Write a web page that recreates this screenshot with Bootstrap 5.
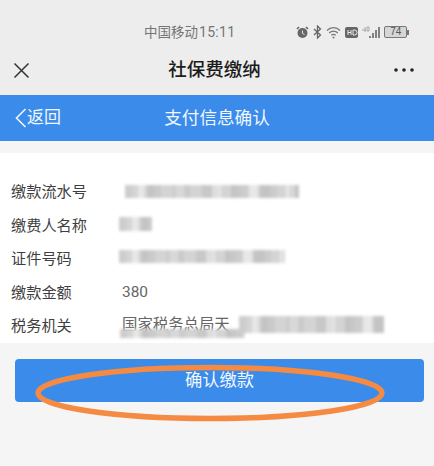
<!DOCTYPE html>
<html>
<head>
  <title>社保费缴纳</title>
  <link rel="stylesheet" href="https://cdn.jsdelivr.net/npm/bootstrap@5.3.0/dist/css/bootstrap.min.css">
  <style>
    body {
      width: 434px;
      height: 466px;
      overflow: hidden;
      background: #f5f5f5;
      font-family: "Liberation Sans", "Noto Sans CJK SC", sans-serif;
      position: relative;
    }

    .wx-head {
      height: 95px;
      background: #ededed;
    }

    .status-line {
      height: 44px;
      padding-top: 20px;
      padding-left: 144px;
      padding-right: 20px;
      color: #757575;
      font-size: 13.5px;
      line-height: 19px;
    }

    .status-time {
      font-family: Roboto, sans-serif;
      font-size: 14px;
      margin-left: 1px;
      letter-spacing: .3px;
    }

    .status-icons {
      margin-left: 61px;
      gap: 4px;
    }

    .batt {
      width: 23px;
      height: 12px;
      border: 1px solid #777;
      border-radius: 2px;
      font-size: 10px;
      line-height: 10px;
      text-align: center;
      background: #d6d6d6;
      color: #555;
    }

    .title-line {
      height: 51px;
      padding: 1px 20px 0 13px;
    }

    .title-text {
      font-size: 18.5px;
      font-weight: 500;
      color: #1c1c1c;
      line-height: 1;
      margin-left: 5px;
    }

    .blue-bar {
      height: 46px;
      background: #3a8bea;
      color: #fff;
      position: relative;
      font-size: 17px;
    }

    .back-link {
      padding-left: 15px;
      color: #f1f7fe;
    }

    .bar-title {
      position: absolute;
      left: 0;
      top: 0;
      width: 100%;
      height: 100%;
      font-size: 17.6px;
      padding-right: 0;
      color: #f1f7fe;
    }

    .info-panel {
      margin-top: 12px;
      height: 190px;
      background: #fff;
      padding: 22px 0 0 11px;
      color: #444;
      font-size: 15.2px;
    }

    .info-line {
      height: 33.5px;
      line-height: 33.5px;
      position: relative;
    }

    .info-label {
      width: 111px;
      color: #3f3f3f;
    }

    .info-value {
      color: #666;
      font-family: Roboto, "Noto Sans CJK SC", sans-serif;
      font-size: 15.4px;
      white-space: nowrap;
    }

    .smudge {
      position: absolute;
      background:
        repeating-linear-gradient(90deg, rgba(190,190,190,.45) 0 13px, rgba(235,235,235,.3) 13px 22px, rgba(170,170,170,.3) 22px 37px),
        repeating-linear-gradient(90deg, #d8d8d8 0 7px, #e6e6e6 7px 19px, #cfcfcf 19px 29px);
      filter: blur(1.6px);
    }

    .pay-wrap {
      padding: 16px 10px 0 15px;
    }

    .pay-btn {
      width: 409px;
      height: 43px;
      background: #3a8bea;
      border: 0;
      border-radius: 4px;
      color: #f1f7fe;
      font-size: 17.3px;
      padding: 0;
    }

    .ring {
      position: absolute;
      left: 30px;
      top: 360px;
      width: 360px;
      height: 66px;
    }
  </style>
</head>
<body>
  <div class="wx-head">
    <div class="status-line d-flex align-items-center">
      <span>中国移动</span><span class="status-time">15:11</span>
      <div class="status-icons d-flex align-items-center">
        <svg width="13" height="13" viewBox="0 0 13 13"><circle cx="6.5" cy="7" r="5" fill="#666"/><path d="M1 3l2-2M12 3l-2-2" stroke="#666" stroke-width="1.6"/><path d="M6.5 4.5v3l2 1" stroke="#ddd" fill="none"/></svg>
        <svg width="9" height="14" viewBox="0 0 9 14"><path d="M1 4l6.5 6-3 3V1l3 3L1 10" fill="none" stroke="#666" stroke-width="1.3"/></svg>
        <svg width="15" height="13" viewBox="0 0 15 13"><path d="M1 4.5a9 9 0 0 1 13 0M3.2 7a6 6 0 0 1 8.600 0M5.300 9.300a3 3 0 0 1 4.400 0" fill="none" stroke="#777" stroke-width="1.200"/><circle cx="7.500" cy="11.500" r="1" fill="#777"/></svg>
        <svg width="13" height="11" viewBox="0 0 13 11"><rect width="13" height="11" rx="2" fill="#666"/><path d="M3 3v5M6 3v5M3 5.500h3M8 3v5h1.500a2.500 2.500 0 0 0 0-5z" stroke="#eee" fill="none"/></svg>
        <svg width="18" height="13" viewBox="0 0 18 13"><path d="M8 12v-2M11 12V7M14 12V4M17 12V1" stroke="#666" stroke-width="1.600"/><path d="M0 4h4M3 1v5M5 1h2v4H5z" stroke="#999" stroke-width=".8" fill="none"/></svg>
        <div class="d-flex align-items-center">
          <div class="batt">74</div>
          <svg width="2" height="5" viewBox="0 0 2 5"><rect width="2" height="5" fill="#777"/></svg>
        </div>
      </div>
    </div>
    <div class="title-line d-flex align-items-center justify-content-between">
      <svg width="17" height="17" viewBox="0 0 17 17"><path d="M1.500 1.500l14 14M15.500 1.500l-14 14" stroke="#333" stroke-width="1.500" fill="none"/></svg>
      <span class="title-text">社保费缴纳</span>
      <svg width="20" height="4" viewBox="0 0 20 4"><circle cx="2" cy="2" r="1.800" fill="#222"/><circle cx="10" cy="2" r="1.800" fill="#222"/><circle cx="18" cy="2" r="1.800" fill="#222"/></svg>
    </div>
  </div>

  <div class="blue-bar d-flex align-items-center">
    <div class="bar-title d-flex align-items-center justify-content-center">支付信息确认</div>
    <div class="back-link d-flex align-items-center">
      <svg width="12" height="20" viewBox="0 0 12 20"><path d="M10.500 1L1.500 10l9 9" fill="none" stroke="#f1f7fe" stroke-width="1.600"/></svg>
      <span>返回</span>
    </div>
  </div>

  <div class="info-panel">
    <div class="info-line d-flex"><span class="info-label">缴款流水号</span><span class="smudge" style="left: 114px; top: 10px; width: 174px; height: 13px"></span></div>
    <div class="info-line d-flex"><span class="info-label">缴费人名称</span><span class="smudge" style="left: 108px; top: 8px; width: 33px; height: 14px"></span></div>
    <div class="info-line d-flex"><span class="info-label">证件号码</span><span class="smudge" style="left: 108px; top: 8px; width: 166px; height: 13px"></span></div>
    <div class="info-line d-flex"><span class="info-label">缴款金额</span><span class="info-value">380</span></div>
    <div class="info-line d-flex"><span class="info-label">税务机关</span><span class="info-value">国家税务总局天</span><span class="smudge" style="left: 109px; top: 20px; width: 125px; height: 9px"></span><span class="smudge" style="left: 228px; top: 7px; width: 145px; height: 17px"></span></div>
  </div>

  <div class="pay-wrap">
    <button type="button" class="btn pay-btn">确认缴款</button>
  </div>

  <svg class="ring" viewBox="0 0 360 66"><ellipse cx="180" cy="33" rx="172" ry="25.500" fill="none" stroke="#f58a42" stroke-width="5.500"/></svg>

  <script src="https://cdn.jsdelivr.net/npm/bootstrap@5.3.0/dist/js/bootstrap.bundle.min.js"></script>
</body>
</html>
